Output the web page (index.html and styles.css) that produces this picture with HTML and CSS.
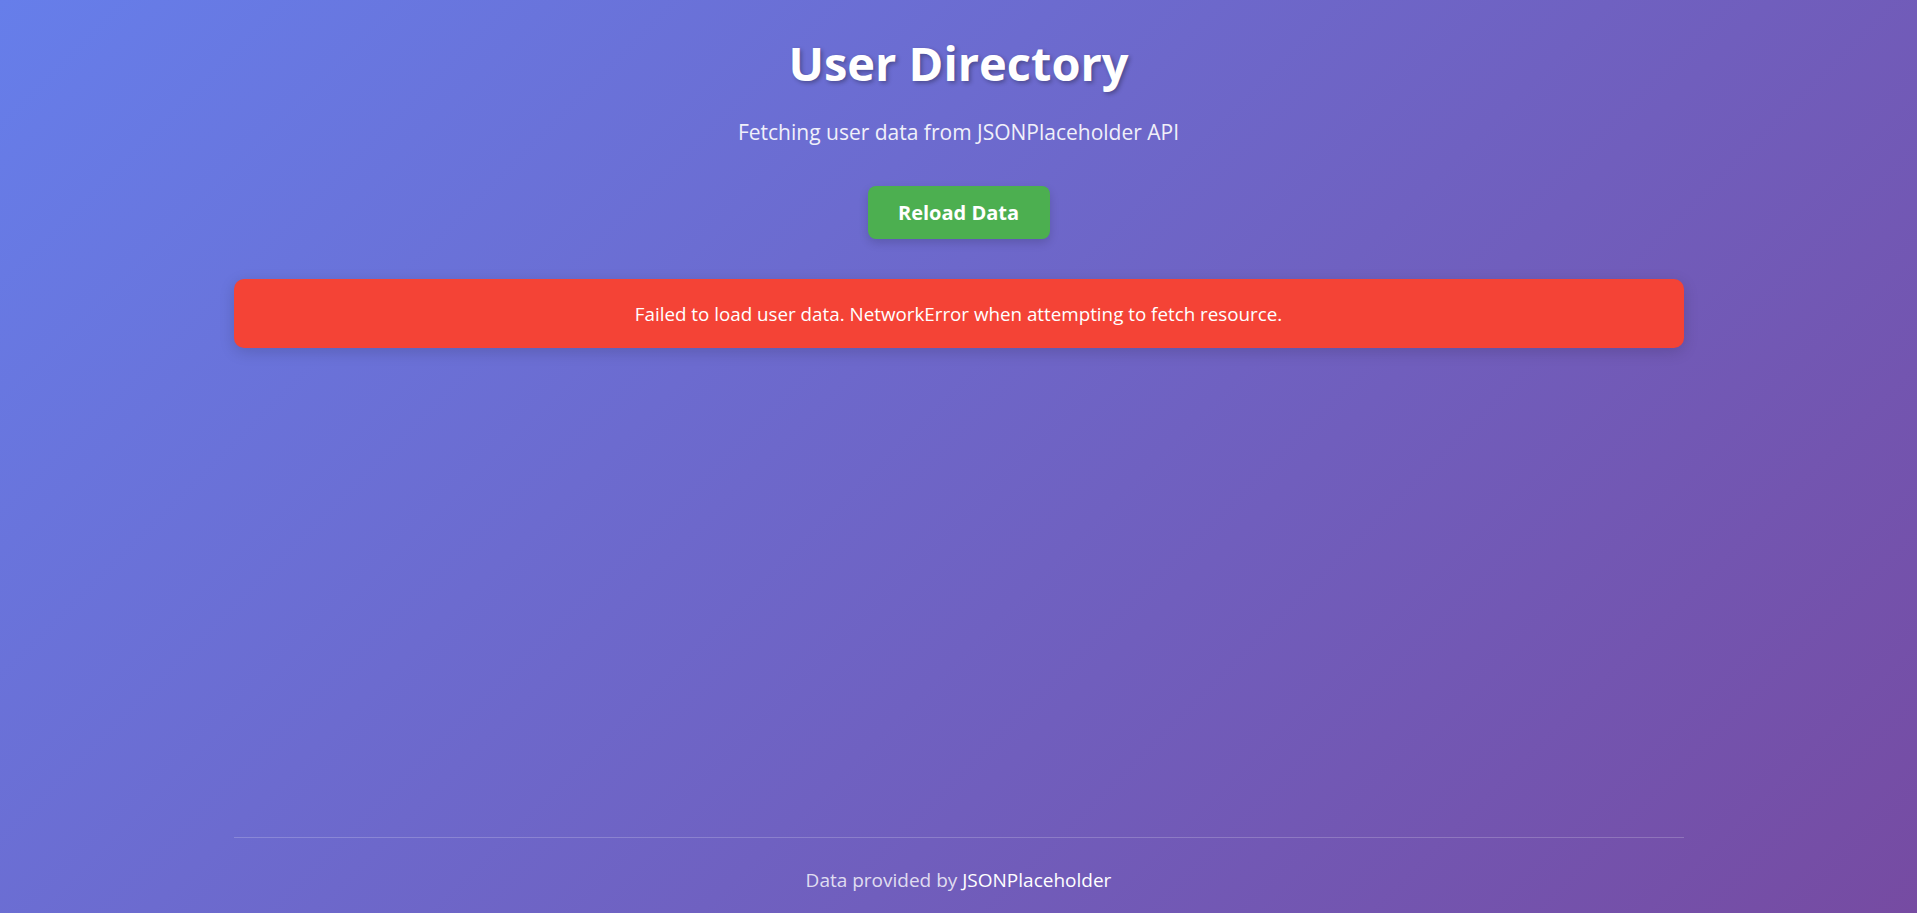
FILE: index.html
```html
<!DOCTYPE html>
<html lang="en">
<head>
<meta charset="utf-8">
<title>User Directory</title>
<link rel="stylesheet" href="styles.css">
</head>
<body>
<div class="page">
  <header class="header">
    <h1 class="title">User Directory</h1>
    <p class="subtitle">Fetching user data from JSONPlaceholder API</p>
    <button class="reload">Reload Data</button>
  </header>
  <main class="content">
    <div class="error">Failed to load user data. NetworkError when attempting to fetch resource.</div>
  </main>
  <footer class="footer">
    <p class="footer-text">Data provided by <span class="footer-link">JSONPlaceholder</span></p>
  </footer>
</div>
</body>
</html>
```

FILE: styles.css
```css
html, body {
  margin: 0;
  padding: 0;
}
body {
  min-height: 100vh;
  background: linear-gradient(135deg, #667eea 0%, #764ba2 100%);
  font-family: "Open Sans", "Noto Sans", sans-serif;
  color: #fff;
}
.page {
  max-width: 1450px;
  margin: 0 auto;
  min-height: 100vh;
  display: flex;
  flex-direction: column;
  box-sizing: border-box;
}
.header {
  display: flex;
  flex-direction: column;
  align-items: center;
  padding-top: 30px;
}
.title {
  margin: 0;
  font-size: 47px;
  font-weight: 700;
  line-height: 66px;
  text-shadow: 2px 2px 4px rgba(0, 0, 0, 0.3);
}
.subtitle {
  margin: 0;
  margin-top: 22px;
  font-size: 21px;
  line-height: 28px;
  opacity: 0.9;
}
.reload {
  margin-top: 40px;
  width: 182px;
  height: 53px;
  border: none;
  border-radius: 8px;
  background: #4caf50;
  color: #fff;
  font-family: inherit;
  font-size: 20px;
  font-weight: 700;
  box-shadow: 0 4px 10px rgba(0, 0, 0, 0.15);
  cursor: pointer;
}
.content {
  padding-top: 40px;
}
.error {
  background: #f44336;
  border-radius: 10px;
  height: 69px;
  display: flex;
  align-items: center;
  justify-content: center;
  font-size: 18.8px;
  box-shadow: 0 4px 15px rgba(0, 0, 0, 0.15);
}
.footer {
  margin-top: auto;
  border-top: 1px solid rgba(255, 255, 255, 0.2);
  padding: 29px 0 20px;
  text-align: center;
}
.footer-text {
  margin: 0;
  font-size: 19px;
  line-height: 26px;
  color: rgba(255, 255, 255, 0.8);
}
.footer-link {
  color: #fff;
}
```
